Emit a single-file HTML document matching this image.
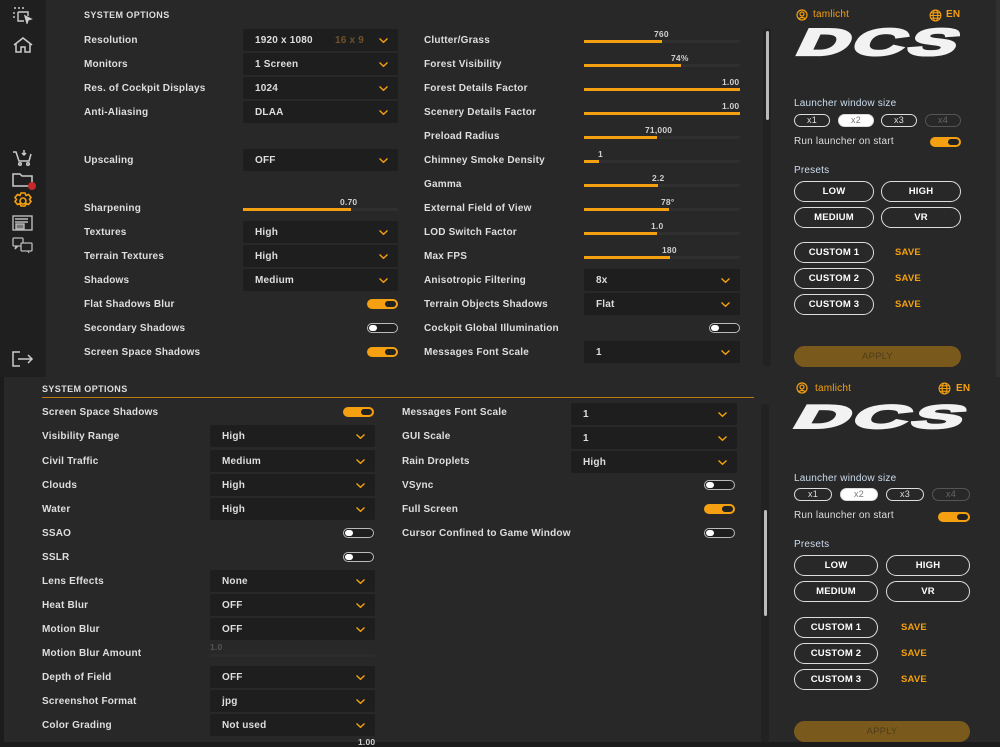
<!DOCTYPE html>
<html><head><meta charset="utf-8"><style>
*{margin:0;padding:0;box-sizing:border-box}
body{width:1000px;height:742px;background:#1c1c1c;overflow:hidden;position:relative;font-family:"Liberation Sans",sans-serif;font-weight:bold;font-size:10px;color:#dedede;letter-spacing:.2px}
div,span{position:absolute}
.win{background:#282828}
.side{background:#1f1f1f}
.l{white-space:nowrap;line-height:12px;margin-top:1px}
.dd{background:#1e1e1e;height:22px;border-radius:2px}
.dd span{left:12px;top:6px;line-height:12px;white-space:nowrap}
.dd svg{position:absolute;right:10px;top:9px}
.tr{height:3px;background:#2f2f2f}
.fi{height:3px;background:#f5a010;left:0;top:0}
.v{font-size:8.5px;color:#cfcfcf;white-space:nowrap;line-height:10px}
.ton{width:31px;height:10px;border-radius:5px;background:#f5a010}
.ton:after{content:"";position:absolute;right:2px;top:2px;width:11px;height:6px;border-radius:3px;background:#222}
.tof{width:31px;height:10px;border-radius:5px;border:1px solid #bbb;background:#1e1e1e}
.tof:after{content:"";position:absolute;left:1px;top:1px;width:8px;height:6px;border-radius:3px;background:#fff}
.pill{height:13px;border:1px solid #ddd;border-radius:7px;text-align:center;line-height:11px;font-size:9px;font-weight:normal}
.btn{height:21px;border:1px solid #ddd;border-radius:11px;text-align:center;line-height:19px;font-size:9.5px;color:#fff}
.save{color:#f5a010;font-size:9.5px}
.apply{height:21px;border-radius:11px;background:#7a5a1c;color:#4e3c1a;text-align:center;line-height:21px;font-weight:normal;font-size:9.5px}
.logo{font-size:40px;font-weight:bold;color:#f2f2f2;letter-spacing:2px;transform-origin:0 0;line-height:40px;-webkit-text-stroke:2.5px #f2f2f2}
.or{color:#f5a010}
.h{font-size:9px;letter-spacing:.4px}
</style></head><body>
<svg width="0" height="0" style="position:absolute"><defs><symbol id="ch" viewBox="0 0 9 5"><polyline points="0.5,0.5 4.5,4.3 8.5,0.5" fill="none" stroke="#f5a010" stroke-width="1.4"/></symbol></defs></svg>

<div class="win" style="left:0;top:0;width:1000px;height:377px"></div>
<div class="side" style="left:0;top:0;width:46px;height:377px"></div>
<div style="left:996px;top:0;width:4px;height:377px;background:#303030"></div>
<svg style="position:absolute;left:12px;top:6px" width="22" height="18" viewBox="0 0 22 18" fill="none" stroke="#ccc" stroke-width="1.4"><path d="M2 2h2M6 2h2M10 2h2M2 6v2M2 10v2" /><path d="M6 6h10v4M6 6v9h6"/><path d="M13 10l6 3-3 1-1 3z" fill="#ccc"/></svg>
<svg style="position:absolute;left:12px;top:36px" width="22" height="18" viewBox="0 0 22 18" fill="none" stroke="#ccc" stroke-width="1.5"><path d="M2 9L11 2l9 7M4 8v8h5v-5h4v5h5V8"/></svg>
<svg style="position:absolute;left:12px;top:149px" width="22" height="18" viewBox="0 0 22 18" fill="none" stroke="#ccc" stroke-width="1.5"><path d="M1 3h3l3 9h10l2-7"/><path d="M12 1v5M10 4l2 2 2-2"/><circle cx="8" cy="15" r="1.3"/><circle cx="16" cy="15" r="1.3"/></svg>
<svg style="position:absolute;left:12px;top:172px" width="26" height="20" viewBox="0 0 26 20" fill="none" stroke="#ccc" stroke-width="1.5"><path d="M1 2h7l2 2h10v10H1z"/><circle cx="20" cy="14" r="4" fill="#c42a2a" stroke="none"/></svg>
<svg style="position:absolute;left:12px;top:192px" width="22" height="18" viewBox="0 0 22 18" fill="none" stroke="#f5a010" stroke-width="1.6"><circle cx="11" cy="9" r="3"/><path d="M9 1h4l1 2.5 2.5-1 2.5 3-1.5 2 1.5 2-2.5 3-2.5-1-1 2.5H9l-1-2.5-2.5 1-2.5-3 1.5-2-1.5-2 2.5-3 2.5 1z"/></svg>
<svg style="position:absolute;left:12px;top:214px" width="22" height="18" viewBox="0 0 22 18" fill="none" stroke="#bbb" stroke-width="1.4"><rect x="1" y="2" width="19" height="14"/><path d="M3 5h13M3 8h13" /><rect x="4" y="10" width="8" height="5" fill="#777"/></svg>
<svg style="position:absolute;left:12px;top:236px" width="22" height="18" viewBox="0 0 22 18" fill="none" stroke="#bbb" stroke-width="1.3"><rect x="1" y="2" width="10" height="8" rx="1"/><rect x="9" y="7" width="11" height="8" rx="1" fill="#1f1f1f"/><path d="M4 10l-1 3 3-3M16 15l1 2"/></svg>
<svg style="position:absolute;left:11px;top:350px" width="24" height="18" viewBox="0 0 24 18" fill="none" stroke="#ccc" stroke-width="1.5"><path d="M9 2H2v14h7M7 9h14M17 5l4 4-4 4"/></svg>

<div class="l h" style="left:84px;top:8px">SYSTEM OPTIONS</div>
<div class="l" style="left:84px;top:34px">Resolution</div>
<div class="dd" style="left:243px;top:29px;width:155px"><span>1920 x 1080</span><span style="left:92px;color:#6e5328">16 x 9</span><svg width="9" height="5"><use href="#ch"/></svg></div>
<div class="l" style="left:84px;top:58px">Monitors</div>
<div class="dd" style="left:243px;top:53px;width:155px"><span>1 Screen</span><svg width="9" height="5"><use href="#ch"/></svg></div>
<div class="l" style="left:84px;top:82px">Res. of Cockpit Displays</div>
<div class="dd" style="left:243px;top:77px;width:155px"><span>1024</span><svg width="9" height="5"><use href="#ch"/></svg></div>
<div class="l" style="left:84px;top:106px">Anti-Aliasing</div>
<div class="dd" style="left:243px;top:101px;width:155px"><span>DLAA</span><svg width="9" height="5"><use href="#ch"/></svg></div>
<div class="l" style="left:84px;top:154px">Upscaling</div>
<div class="dd" style="left:243px;top:149px;width:155px"><span>OFF</span><svg width="9" height="5"><use href="#ch"/></svg></div>
<div class="l" style="left:84px;top:202px">Sharpening</div>
<div class="v" style="left:340px;top:197px">0.70</div>
<div class="tr" style="left:243px;top:208px;width:155px"><div class="fi" style="width:108px"></div></div>
<div class="l" style="left:84px;top:226px">Textures</div>
<div class="dd" style="left:243px;top:221px;width:155px"><span>High</span><svg width="9" height="5"><use href="#ch"/></svg></div>
<div class="l" style="left:84px;top:250px">Terrain Textures</div>
<div class="dd" style="left:243px;top:245px;width:155px"><span>High</span><svg width="9" height="5"><use href="#ch"/></svg></div>
<div class="l" style="left:84px;top:274px">Shadows</div>
<div class="dd" style="left:243px;top:269px;width:155px"><span>Medium</span><svg width="9" height="5"><use href="#ch"/></svg></div>
<div class="l" style="left:84px;top:298px">Flat Shadows Blur</div>
<div class="ton" style="left:367px;top:299px"></div>
<div class="l" style="left:84px;top:322px">Secondary Shadows</div>
<div class="tof" style="left:367px;top:323px"></div>
<div class="l" style="left:84px;top:346px">Screen Space Shadows</div>
<div class="ton" style="left:367px;top:347px"></div>
<div class="l" style="left:424px;top:34px">Clutter/Grass</div>
<div class="v" style="left:654px;top:29px">760</div>
<div class="tr" style="left:584px;top:40px;width:156px"><div class="fi" style="width:78px"></div></div>
<div class="l" style="left:424px;top:58px">Forest Visibility</div>
<div class="v" style="left:671px;top:53px">74%</div>
<div class="tr" style="left:584px;top:64px;width:156px"><div class="fi" style="width:97px"></div></div>
<div class="l" style="left:424px;top:82px">Forest Details Factor</div>
<div class="v" style="left:722px;top:77px">1.00</div>
<div class="tr" style="left:584px;top:88px;width:156px"><div class="fi" style="width:156px"></div></div>
<div class="l" style="left:424px;top:106px">Scenery Details Factor</div>
<div class="v" style="left:722px;top:101px">1.00</div>
<div class="tr" style="left:584px;top:112px;width:156px"><div class="fi" style="width:156px"></div></div>
<div class="l" style="left:424px;top:130px">Preload Radius</div>
<div class="v" style="left:645px;top:125px">71,000</div>
<div class="tr" style="left:584px;top:136px;width:156px"><div class="fi" style="width:73px"></div></div>
<div class="l" style="left:424px;top:154px">Chimney Smoke Density</div>
<div class="v" style="left:598px;top:149px">1</div>
<div class="tr" style="left:584px;top:160px;width:156px"><div class="fi" style="width:15px"></div></div>
<div class="l" style="left:424px;top:178px">Gamma</div>
<div class="v" style="left:652px;top:173px">2.2</div>
<div class="tr" style="left:584px;top:184px;width:156px"><div class="fi" style="width:74px"></div></div>
<div class="l" style="left:424px;top:202px">External Field of View</div>
<div class="v" style="left:661px;top:197px">78°</div>
<div class="tr" style="left:584px;top:208px;width:156px"><div class="fi" style="width:85px"></div></div>
<div class="l" style="left:424px;top:226px">LOD Switch Factor</div>
<div class="v" style="left:651px;top:221px">1.0</div>
<div class="tr" style="left:584px;top:232px;width:156px"><div class="fi" style="width:73px"></div></div>
<div class="l" style="left:424px;top:250px">Max FPS</div>
<div class="v" style="left:662px;top:245px">180</div>
<div class="tr" style="left:584px;top:256px;width:156px"><div class="fi" style="width:86px"></div></div>
<div class="l" style="left:424px;top:274px">Anisotropic Filtering</div>
<div class="dd" style="left:584px;top:269px;width:156px"><span>8x</span><svg width="9" height="5"><use href="#ch"/></svg></div>
<div class="l" style="left:424px;top:298px">Terrain Objects Shadows</div>
<div class="dd" style="left:584px;top:293px;width:156px"><span>Flat</span><svg width="9" height="5"><use href="#ch"/></svg></div>
<div class="l" style="left:424px;top:322px">Cockpit Global Illumination</div>
<div class="tof" style="left:709px;top:323px"></div>
<div class="l" style="left:424px;top:346px">Messages Font Scale</div>
<div class="dd" style="left:584px;top:341px;width:156px"><span>1</span><svg width="9" height="5"><use href="#ch"/></svg></div>
<div style="left:763px;top:28px;width:8px;height:338px;background:#222;border-radius:3px"></div>
<div style="left:766px;top:31px;width:3px;height:89px;background:#bbb;border-radius:2px"></div>
<svg style="position:absolute;left:796px;top:9px" width="12" height="12" viewBox="0 0 12 12" fill="none" stroke="#f5a010" stroke-width="1.2"><circle cx="6" cy="6" r="5"/><circle cx="6" cy="5" r="2"/><path d="M3 10c1-2 5-2 6 0"/></svg>
<div class="l or" style="left:813px;top:8px;font-weight:normal">tamlicht</div>
<svg style="position:absolute;left:929px;top:9px" width="13" height="13" viewBox="0 0 12 12" fill="none" stroke="#f5a010" stroke-width="1"><circle cx="6" cy="6" r="5"/><ellipse cx="6" cy="6" rx="2.2" ry="5"/><path d="M1 6h10M2 3.5h8M2 8.5h8"/></svg>
<div class="l or" style="left:946px;top:8px">EN</div>
<div class="logo" style="left:808px;top:24px;transform:scale(1.8,0.94) skewX(-14deg)">DCS</div>
<div class="l" style="left:794px;top:97px;font-weight:normal;color:#cde">Launcher window size</div>
<div class="pill" style="left:794px;top:114px;width:36px">x1</div>
<div class="pill" style="left:838px;top:114px;width:36px;background:#fff;color:#777">x2</div>
<div class="pill" style="left:881px;top:114px;width:36px">x3</div>
<div class="pill" style="left:925px;top:114px;width:36px;border-color:#555;color:#666">x4</div>
<div class="l" style="left:794px;top:135px;font-weight:normal">Run launcher on start</div>
<div class="ton" style="left:930px;top:137px"></div>
<div class="l" style="left:794px;top:164px;font-weight:normal;color:#cde">Presets</div>
<div class="btn" style="left:794px;top:181px;width:80px">LOW</div>
<div class="btn" style="left:881px;top:181px;width:80px">HIGH</div>
<div class="btn" style="left:794px;top:207px;width:80px">MEDIUM</div>
<div class="btn" style="left:881px;top:207px;width:80px">VR</div>
<div class="btn" style="left:794px;top:242px;width:80px">CUSTOM 1</div>
<div class="btn" style="left:794px;top:268px;width:80px">CUSTOM 2</div>
<div class="btn" style="left:794px;top:294px;width:80px">CUSTOM 3</div>
<div class="l save" style="left:895px;top:246px">SAVE</div>
<div class="l save" style="left:895px;top:272px">SAVE</div>
<div class="l save" style="left:895px;top:298px">SAVE</div>
<div class="apply" style="left:794px;top:346px;width:167px">APPLY</div>

<div class="win" style="left:4px;top:377px;width:996px;height:365px"></div>
<div class="l h" style="left:42px;top:382px">SYSTEM OPTIONS</div>
<div style="left:42px;top:397px;width:712px;height:1px;background:#c07a10"></div>
<div class="l" style="left:42px;top:406px">Screen Space Shadows</div>
<div class="ton" style="left:343px;top:407px"></div>
<div class="l" style="left:42px;top:430px">Visibility Range</div>
<div class="dd" style="left:210px;top:425px;width:165px"><span>High</span><svg width="9" height="5"><use href="#ch"/></svg></div>
<div class="l" style="left:42px;top:455px">Civil Traffic</div>
<div class="dd" style="left:210px;top:450px;width:165px"><span>Medium</span><svg width="9" height="5"><use href="#ch"/></svg></div>
<div class="l" style="left:42px;top:479px">Clouds</div>
<div class="dd" style="left:210px;top:474px;width:165px"><span>High</span><svg width="9" height="5"><use href="#ch"/></svg></div>
<div class="l" style="left:42px;top:503px">Water</div>
<div class="dd" style="left:210px;top:498px;width:165px"><span>High</span><svg width="9" height="5"><use href="#ch"/></svg></div>
<div class="l" style="left:42px;top:527px">SSAO</div>
<div class="tof" style="left:343px;top:528px"></div>
<div class="l" style="left:42px;top:551px">SSLR</div>
<div class="tof" style="left:343px;top:552px"></div>
<div class="l" style="left:42px;top:575px">Lens Effects</div>
<div class="dd" style="left:210px;top:570px;width:165px"><span>None</span><svg width="9" height="5"><use href="#ch"/></svg></div>
<div class="l" style="left:42px;top:599px">Heat Blur</div>
<div class="dd" style="left:210px;top:594px;width:165px"><span>OFF</span><svg width="9" height="5"><use href="#ch"/></svg></div>
<div class="l" style="left:42px;top:623px">Motion Blur</div>
<div class="dd" style="left:210px;top:618px;width:165px"><span>OFF</span><svg width="9" height="5"><use href="#ch"/></svg></div>
<div class="l" style="left:42px;top:647px">Motion Blur Amount</div>
<div class="v" style="left:210px;top:642px;color:#555">1.0</div>
<div class="tr" style="left:210px;top:654px;width:165px;background:#2c2c2c"></div>
<div class="l" style="left:42px;top:671px">Depth of Field</div>
<div class="dd" style="left:210px;top:666px;width:165px"><span>OFF</span><svg width="9" height="5"><use href="#ch"/></svg></div>
<div class="l" style="left:42px;top:695px">Screenshot Format</div>
<div class="dd" style="left:210px;top:690px;width:165px"><span>jpg</span><svg width="9" height="5"><use href="#ch"/></svg></div>
<div class="l" style="left:42px;top:719px">Color Grading</div>
<div class="dd" style="left:210px;top:714px;width:165px"><span>Not used</span><svg width="9" height="5"><use href="#ch"/></svg></div>
<div class="v" style="left:358px;top:737px">1.00</div>
<div class="l" style="left:402px;top:406px">Messages Font Scale</div>
<div class="dd" style="left:571px;top:403px;width:166px"><span>1</span><svg width="9" height="5"><use href="#ch"/></svg></div>
<div class="l" style="left:402px;top:430px">GUI Scale</div>
<div class="dd" style="left:571px;top:427px;width:166px"><span>1</span><svg width="9" height="5"><use href="#ch"/></svg></div>
<div class="l" style="left:402px;top:455px">Rain Droplets</div>
<div class="dd" style="left:571px;top:451px;width:166px"><span>High</span><svg width="9" height="5"><use href="#ch"/></svg></div>
<div class="l" style="left:402px;top:479px">VSync</div>
<div class="tof" style="left:704px;top:480px"></div>
<div class="l" style="left:402px;top:503px">Full Screen</div>
<div class="ton" style="left:704px;top:504px"></div>
<div class="l" style="left:402px;top:527px">Cursor Confined to Game Window</div>
<div class="tof" style="left:704px;top:528px"></div>
<div style="left:761px;top:404px;width:8px;height:338px;background:#222;border-radius:3px"></div>
<div style="left:764px;top:510px;width:3px;height:106px;background:#bbb;border-radius:2px"></div>
<svg style="position:absolute;left:796px;top:382px" width="12" height="12" viewBox="0 0 12 12" fill="none" stroke="#f5a010" stroke-width="1.2"><circle cx="6" cy="6" r="5"/><circle cx="6" cy="5" r="2"/><path d="M3 10c1-2 5-2 6 0"/></svg>
<div class="l or" style="left:815px;top:382px;font-weight:normal">tamlicht</div>
<svg style="position:absolute;left:938px;top:382px" width="13" height="13" viewBox="0 0 12 12" fill="none" stroke="#f5a010" stroke-width="1"><circle cx="6" cy="6" r="5"/><ellipse cx="6" cy="6" rx="2.2" ry="5"/><path d="M1 6h10M2 3.5h8M2 8.5h8"/></svg>
<div class="l or" style="left:956px;top:382px">EN</div>
<div class="logo" style="left:806px;top:401px;transform:scale(1.9,0.82) skewX(-14deg)">DCS</div>
<div class="l" style="left:794px;top:472px;font-weight:normal;color:#cde">Launcher window size</div>
<div class="pill" style="left:794px;top:488px;width:38px">x1</div>
<div class="pill" style="left:840px;top:488px;width:38px;background:#fff;color:#777">x2</div>
<div class="pill" style="left:886px;top:488px;width:38px">x3</div>
<div class="pill" style="left:932px;top:488px;width:38px;border-color:#555;color:#666">x4</div>
<div class="l" style="left:794px;top:509px;font-weight:normal">Run launcher on start</div>
<div class="ton" style="left:938px;top:512px;width:32px"></div>
<div class="l" style="left:794px;top:538px;font-weight:normal;color:#cde">Presets</div>
<div class="btn" style="left:794px;top:555px;width:84px">LOW</div>
<div class="btn" style="left:886px;top:555px;width:84px">HIGH</div>
<div class="btn" style="left:794px;top:581px;width:84px">MEDIUM</div>
<div class="btn" style="left:886px;top:581px;width:84px">VR</div>
<div class="btn" style="left:794px;top:617px;width:84px">CUSTOM 1</div>
<div class="btn" style="left:794px;top:643px;width:84px">CUSTOM 2</div>
<div class="btn" style="left:794px;top:669px;width:84px">CUSTOM 3</div>
<div class="l save" style="left:901px;top:621px">SAVE</div>
<div class="l save" style="left:901px;top:647px">SAVE</div>
<div class="l save" style="left:901px;top:673px">SAVE</div>
<div class="apply" style="left:794px;top:721px;width:176px">APPLY</div>
</body></html>
